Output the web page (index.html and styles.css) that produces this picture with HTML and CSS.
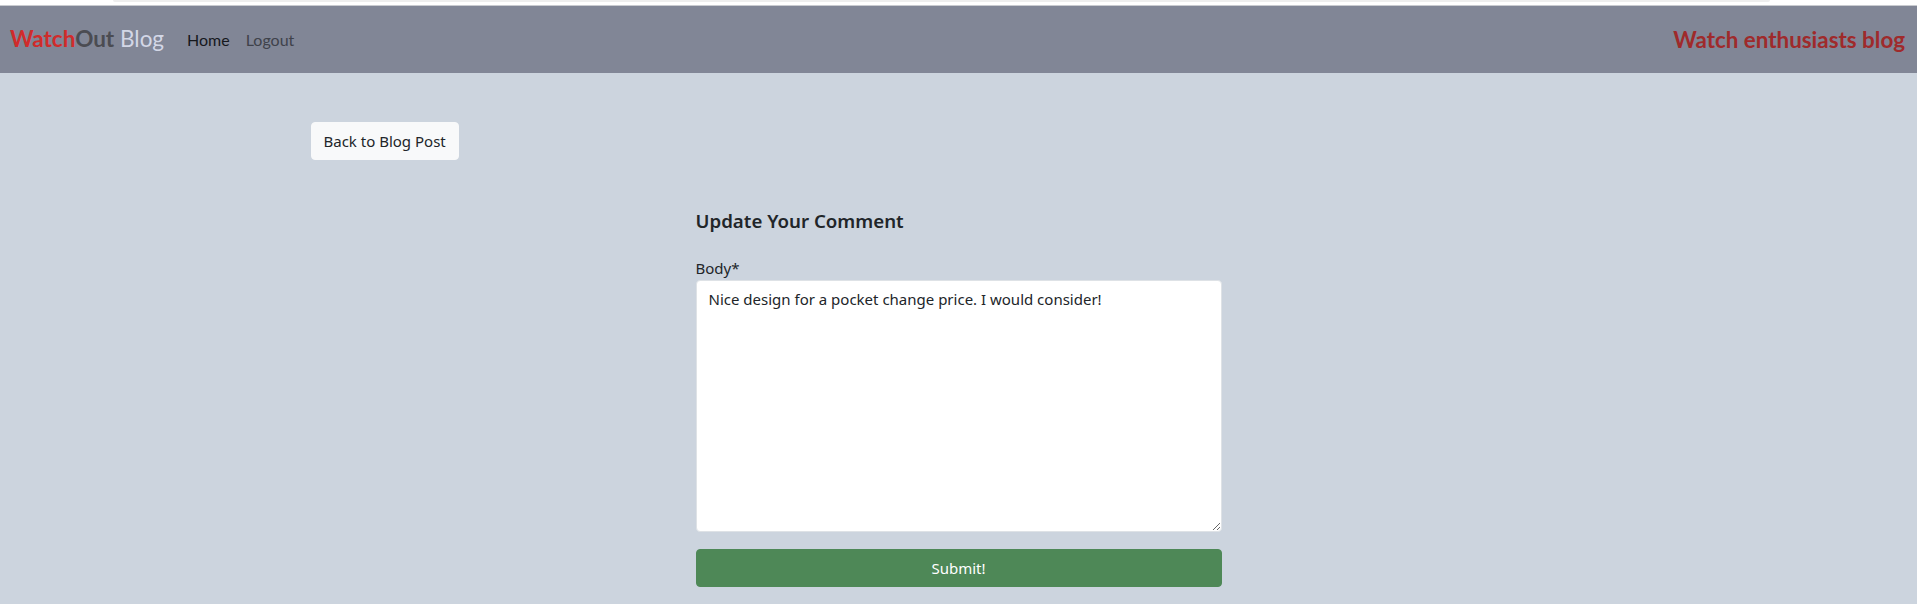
FILE: index.html
```html
<!DOCTYPE html>
<html lang="en">
<head>
<meta charset="utf-8">
<title>Update Comment - WatchOut Blog</title>
<link rel="stylesheet" href="styles.css">
</head>
<body>
<div class="topstrip"><div class="tab"></div></div>
<nav class="navbar">
  <div class="nav-left">
    <a class="brand" href="#"><span class="b-watch">Watch</span><span class="b-out">Out</span> <span class="b-blog">Blog</span></a>
    <ul class="nav">
      <li><a class="nav-link active" href="#">Home</a></li>
      <li><a class="nav-link" href="#">Logout</a></li>
    </ul>
  </div>
  <span class="tagline">Watch enthusiasts blog</span>
</nav>
<main class="container">
  <a class="btn btn-light" href="#">Back to Blog Post</a>
  <div class="row">
    <div class="col">
      <h5 class="title">Update Your Comment</h5>
      <form class="form">
        <label class="label" for="body">Body*</label>
        <textarea id="body" class="textarea">Nice design for a pocket change price. I would consider!</textarea>
        <button type="button" class="btn-submit">Submit!</button>
      </form>
    </div>
  </div>
</main>
</body>
</html>
```
FILE: styles.css
```css
* { box-sizing: border-box; }
html, body { margin: 0; padding: 0; }
body {
  background: #ccd4de;
  font-family: "Noto Sans", "Liberation Sans", sans-serif;
  font-size: 16px;
  line-height: 1.5;
  color: #212529;
}
.topstrip {
  height: 6px;
  background: #ffffff;
  padding: 0 147px 0 113px;
  border-bottom: 1px solid #c9cbd0;
}
.tab {
  height: 2px;
  background: #eeeeee;
  border-radius: 0 0 4px 4px;
}
.navbar {
  height: 67px;
  background: #818696;
  display: flex;
  align-items: center;
  justify-content: space-between;
  padding: 0 12px 0 10px;
  font-family: Lato, "Noto Sans", sans-serif;
}
.nav-left { display: flex; align-items: center; }
.brand {
  font-size: 22.5px;
  text-decoration: none;
  margin-right: 15px;
  line-height: 1;
}
.b-watch { color: #d12b2b; font-weight: 700; }
.b-out { color: #4b4c52; font-weight: 700; }
.b-blog { color: #d3d7e6; font-weight: 400; }
.nav { list-style: none; margin: 0; padding: 0; display: flex; }
.nav-link {
  display: block;
  padding: 8px;
  font-size: 16px;
  text-decoration: none;
  color: #3f424b;
}
.nav-link.active { color: #16181d; }
.tagline {
  color: #9f2a2b;
  font-weight: 700;
  font-size: 22.4px;
}
.container {
  max-width: 1320px;
  margin: 0 auto;
  padding: 49px 12px 0;
}
.btn {
  display: inline-block;
  padding: 6px 12px;
  border: 1px solid transparent;
  border-radius: 4px;
  font-size: 15px;
  line-height: 24px;
  text-decoration: none;
}
.btn-light { background: #f8f9fa; color: #212529; border-color: #f8f9fa; }
.row { display: flex; justify-content: center; margin-top: 50px; }
.col { width: 550px; padding: 0 12px; }
.title {
  margin: 0 0 24px;
  font-size: 18.7px;
  font-weight: 600;
  line-height: 1.2;
}
.form { display: flex; flex-direction: column; }
.label { display: block; font-size: 15px; line-height: 24px; }
.textarea {
  height: 252px;
  width: 100%;
  padding: 6px 12px;
  font-family: inherit;
  font-size: 15px;
  line-height: 24px;
  color: #212529;
  background: #ffffff;
  border: 1px solid #dee2e6;
  border-radius: 4px;
}
.btn-submit {
  margin-top: 17px;
  height: 38px;
  width: 100%;
  background: #4e8857;
  color: #ffffff;
  border: 1px solid #4e8857;
  border-radius: 4px;
  font-family: inherit;
  font-size: 15px;
}
```
